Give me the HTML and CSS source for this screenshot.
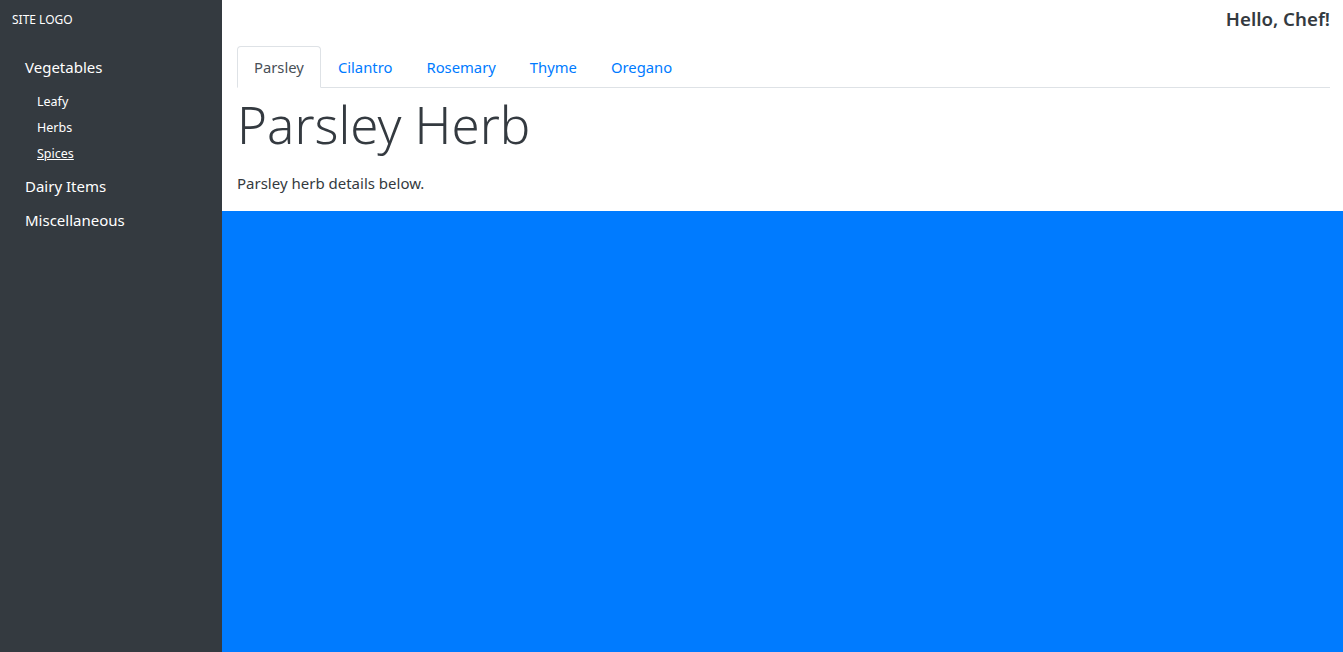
FILE: index.html
```html
<!DOCTYPE html>
<html>
<head>
<meta charset="utf-8">
<link rel="stylesheet" href="styles.css">
</head>
<body>
<div class="app">
  <aside class="sidebar">
    <div class="logo">SITE LOGO</div>
    <ul class="menu">
      <li class="menu-item">
        <a href="#">Vegetables</a>
        <ul class="submenu">
          <li><a href="#">Leafy</a></li>
          <li><a href="#">Herbs</a></li>
          <li><a href="#" class="active">Spices</a></li>
        </ul>
      </li>
      <li class="menu-item"><a href="#">Dairy Items</a></li>
      <li class="menu-item"><a href="#">Miscellaneous</a></li>
    </ul>
  </aside>
  <main class="main">
    <div class="top">
      <div class="greeting">Hello, Chef!</div>
      <ul class="tabs">
        <li><a href="#" class="tab active">Parsley</a></li>
        <li><a href="#" class="tab">Cilantro</a></li>
        <li><a href="#" class="tab">Rosemary</a></li>
        <li><a href="#" class="tab">Thyme</a></li>
        <li><a href="#" class="tab">Oregano</a></li>
      </ul>
      <h1 class="title">Parsley Herb</h1>
      <p class="lead-text">Parsley herb details below.</p>
    </div>
    <div class="panel"></div>
  </main>
</div>
</body>
</html>
```
FILE: styles.css
```css
* { box-sizing: border-box; }
html, body { height: 100%; }
body {
  margin: 0;
  font-family: "Noto Sans", "Open Sans", sans-serif;
  font-size: 16px;
  color: #343a40;
}
.app {
  display: flex;
  height: 100%;
}
.sidebar {
  width: 222px;
  flex: 0 0 222px;
  background: #343a40;
  color: #fff;
}
.logo {
  font-size: 12px;
  padding: 11px 12px 0;
  height: 30px;
}
.menu, .submenu {
  list-style: none;
  margin: 0;
  padding: 0;
}
.menu {
  padding-top: 25px;
}
.menu-item > a {
  display: block;
  padding: 0 25px;
  font-size: 15px;
  line-height: 24px;
  margin-bottom: 10px;
  color: #fff;
  text-decoration: none;
}
.submenu {
  margin-top: 2px;
  margin-bottom: 7px;
}
.submenu a {
  display: block;
  padding: 0 37px;
  font-size: 12.5px;
  line-height: 26px;
  color: #fff;
  text-decoration: none;
}
.submenu a.active { text-decoration: underline; }
.main {
  flex: 1;
  display: flex;
  flex-direction: column;
}
.top {
  padding: 0 13px 0 15px;
}
.greeting {
  text-align: right;
  font-size: 18.7px;
  font-weight: 600;
  line-height: 22px;
  padding-top: 8px;
  height: 46px;
}
.tabs {
  list-style: none;
  margin: 0;
  padding: 0;
  display: flex;
  border-bottom: 1px solid #dee2e6;
}
.tab {
  display: block;
  padding: 8px 16px;
  line-height: 24px;
  font-size: 14.8px;
  color: #007bff;
  text-decoration: none;
  border: 1px solid transparent;
  border-top-left-radius: 4px;
  border-top-right-radius: 4px;
  margin-bottom: -1px;
}
.tab.active {
  color: #495057;
  background: #fff;
  border-color: #dee2e6 #dee2e6 #fff;
}
.title {
  margin: 0;
  font-size: 51px;
  font-weight: 300;
  line-height: 72px;
}
.lead-text {
  margin: 11px 0 16px;
  font-size: 15px;
  line-height: 24px;
}
.panel {
  flex: 1;
  background: #007bff;
}
```
